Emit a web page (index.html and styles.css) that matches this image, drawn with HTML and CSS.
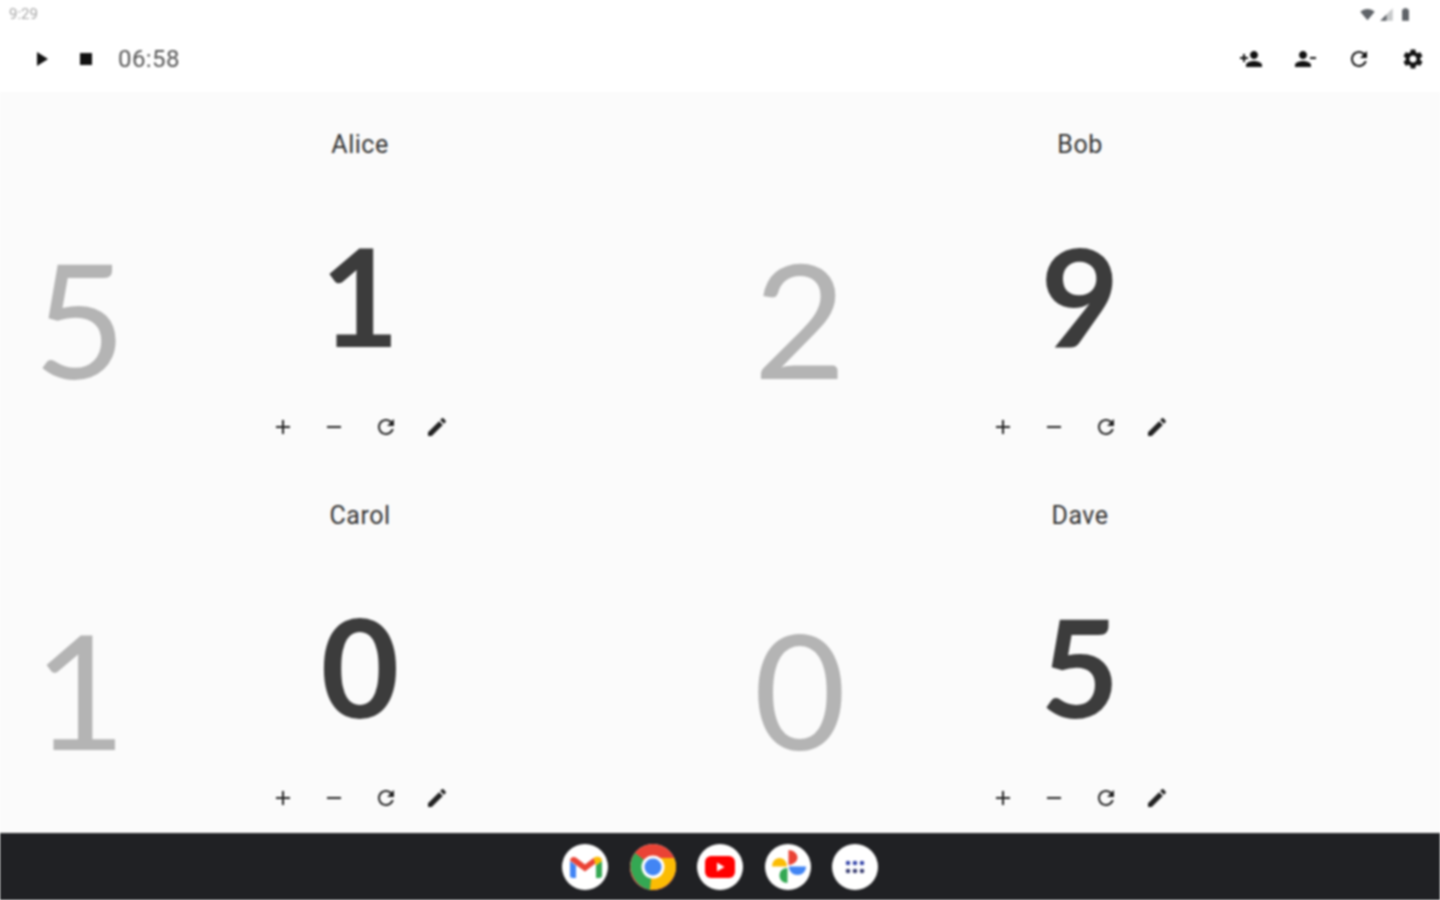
FILE: index.html
```html
<!DOCTYPE html>
<html>
<head>
  <title>Score Keeper</title>
  <link rel="stylesheet" href="styles.css">
</head>
<body>
  <svg class="icon-defs" width="0" height="0">
    <symbol id="i-play" viewBox="0 0 24 24"><path d="M8 5v14l11-7z"/></symbol>
    <symbol id="i-stop" viewBox="0 0 24 24"><path d="M6 6h12v12H6z"/></symbol>
    <symbol id="i-person-add" viewBox="0 0 24 24"><path d="M15 12c2.21 0 4-1.79 4-4s-1.79-4-4-4-4 1.79-4 4 1.79 4 4 4zm-9-2V7H4v3H1v2h3v3h2v-3h3v-2H6zm9 4c-2.67 0-8 1.34-8 4v2h16v-2c0-2.66-5.33-4-8-4z"/></symbol>
    <symbol id="i-person-remove" viewBox="0 0 24 24"><path d="M14 8c0-2.21-1.79-4-4-4S6 5.79 6 8s1.79 4 4 4 4-1.79 4-4zm3 2v2h6v-2h-6zM2 18v2h16v-2c0-2.66-5.33-4-8-4s-8 1.34-8 4z"/></symbol>
    <symbol id="i-refresh" viewBox="0 0 24 24"><path d="M17.65 6.35C16.2 4.9 14.21 4 12 4c-4.42 0-7.99 3.58-7.99 8s3.57 8 7.99 8c3.73 0 6.84-2.55 7.73-6h-2.08c-.82 2.33-3.04 4-5.65 4-3.31 0-6-2.69-6-6s2.69-6 6-6c1.66 0 3.14.69 4.22 1.78L13 11h7V4l-2.35 2.35z"/></symbol>
    <symbol id="i-settings" viewBox="0 0 24 24"><path d="M19.14 12.94c.04-.3.06-.61.06-.94 0-.32-.02-.64-.07-.94l2.03-1.58c.18-.14.23-.41.12-.61l-1.92-3.32c-.12-.22-.37-.29-.59-.22l-2.39.96c-.5-.38-1.03-.7-1.62-.94l-.36-2.54c-.04-.24-.24-.41-.48-.41h-3.84c-.24 0-.43.17-.47.41l-.36 2.54c-.59.24-1.13.57-1.62.94l-2.39-.96c-.22-.08-.47 0-.59.22L2.74 8.87c-.12.21-.08.47.12.61l2.03 1.58c-.05.3-.09.63-.09.94s.02.64.07.94l-2.03 1.58c-.18.14-.23.41-.12.61l1.92 3.32c.12.22.37.29.59.22l2.39-.96c.5.38 1.03.7 1.62.94l.36 2.54c.05.24.24.41.48.41h3.84c.24 0 .44-.17.47-.41l.36-2.54c.59-.24 1.13-.56 1.62-.94l2.39.96c.22.08.47 0 .59-.22l1.92-3.32c.12-.22.07-.47-.12-.61l-2.01-1.58zM12 15.6c-1.98 0-3.6-1.62-3.6-3.6s1.62-3.6 3.6-3.6 3.6 1.62 3.6 3.6-1.62 3.6-3.6 3.6z"/></symbol>
    <symbol id="i-add" viewBox="0 0 24 24"><path d="M19 13h-6v6h-2v-6H5v-2h6V5h2v6h6v2z"/></symbol>
    <symbol id="i-remove" viewBox="0 0 24 24"><path d="M19 13H5v-2h14v2z"/></symbol>
    <symbol id="i-edit" viewBox="0 0 24 24"><path d="M3 17.25V21h3.75L17.81 9.94l-3.75-3.75L3 17.25zM20.71 7.04c.39-.39.39-1.02 0-1.41l-2.34-2.34c-.39-.39-1.02-.39-1.41 0l-1.83 1.83 3.75 3.75 1.83-1.83z"/></symbol>
  </svg>

  <div class="status-bar">
    <span class="status-time">9:29</span>
    <div class="status-icons">
      <svg class="status-icon" viewBox="0 0 24 24"><path d="M12 21L0.5 7.500C3.500 4.800 7.500 3 12 3s8.500 1.800 11.500 4.500z"/></svg>
      <svg class="status-icon" viewBox="0 0 24 24"><path d="M2 22L22 2v20z" opacity=".35"/><path d="M2 22l10-10v10z"/></svg>
      <svg class="status-icon" viewBox="0 0 24 24"><path d="M9 2h6v2h2.500v18h-11V4H9z"/></svg>
    </div>
  </div>

  <header class="app-bar">
    <div class="timer-controls">
      <button class="ctrl-btn"><svg class="icon"><use href="#i-play"/></svg></button>
      <button class="ctrl-btn"><svg class="icon"><use href="#i-stop"/></svg></button>
      <span class="timer">06:58</span>
    </div>
    <div class="app-actions">
      <button class="action-btn"><svg class="icon"><use href="#i-person-add"/></svg></button>
      <button class="action-btn"><svg class="icon"><use href="#i-person-remove"/></svg></button>
      <button class="action-btn"><svg class="icon"><use href="#i-refresh"/></svg></button>
      <button class="action-btn"><svg class="icon"><use href="#i-settings"/></svg></button>
    </div>
  </header>

  <main class="players">
    <section class="player">
      <div class="prev-score">5</div>
      <div class="player-main">
        <div class="player-name">Alice</div>
        <div class="score">1</div>
        <div class="score-actions">
          <button class="score-btn"><svg class="icon-sm"><use href="#i-add"/></svg></button>
          <button class="score-btn"><svg class="icon-sm"><use href="#i-remove"/></svg></button>
          <button class="score-btn"><svg class="icon-sm"><use href="#i-refresh"/></svg></button>
          <button class="score-btn"><svg class="icon-sm"><use href="#i-edit"/></svg></button>
        </div>
      </div>
    </section>
    <section class="player">
      <div class="prev-score">2</div>
      <div class="player-main">
        <div class="player-name">Bob</div>
        <div class="score">9</div>
        <div class="score-actions">
          <button class="score-btn"><svg class="icon-sm"><use href="#i-add"/></svg></button>
          <button class="score-btn"><svg class="icon-sm"><use href="#i-remove"/></svg></button>
          <button class="score-btn"><svg class="icon-sm"><use href="#i-refresh"/></svg></button>
          <button class="score-btn"><svg class="icon-sm"><use href="#i-edit"/></svg></button>
        </div>
      </div>
    </section>
    <section class="player">
      <div class="prev-score">1</div>
      <div class="player-main">
        <div class="player-name">Carol</div>
        <div class="score">0</div>
        <div class="score-actions">
          <button class="score-btn"><svg class="icon-sm"><use href="#i-add"/></svg></button>
          <button class="score-btn"><svg class="icon-sm"><use href="#i-remove"/></svg></button>
          <button class="score-btn"><svg class="icon-sm"><use href="#i-refresh"/></svg></button>
          <button class="score-btn"><svg class="icon-sm"><use href="#i-edit"/></svg></button>
        </div>
      </div>
    </section>
    <section class="player">
      <div class="prev-score">0</div>
      <div class="player-main">
        <div class="player-name">Dave</div>
        <div class="score">5</div>
        <div class="score-actions">
          <button class="score-btn"><svg class="icon-sm"><use href="#i-add"/></svg></button>
          <button class="score-btn"><svg class="icon-sm"><use href="#i-remove"/></svg></button>
          <button class="score-btn"><svg class="icon-sm"><use href="#i-refresh"/></svg></button>
          <button class="score-btn"><svg class="icon-sm"><use href="#i-edit"/></svg></button>
        </div>
      </div>
    </section>
  </main>

  <footer class="dock">
    <div class="dock-app">
      <svg viewBox="0 0 46 46" class="dock-svg">
        <path d="M8 17c0-4 4-5 6.500-3L23 20.500l8.500-6.500 2.500 5-11 8.500-15-11z" fill="#ea4335"/>
        <path d="M8 17l6 4.500V34h-3.500C9 34 8 33 8 31.500z" fill="#4285f4"/>
        <path d="M34 21l6-4v14.500c0 1.500-1 2.500-2.500 2.500H34z" fill="#34a853"/>
        <path d="M31.500 14c2.500-2 8.500-2 8.500 3l-6 4.500z" fill="#fbbc04"/>
      </svg>
    </div>
    <div class="dock-app chrome">
      <svg viewBox="0 0 46 46" class="dock-svg">
        <circle cx="23" cy="23" r="23" fill="#ea4335"/>
        <path d="M23 23L5 9C0 16-1 24 3 32c3 7 9 12 17 14z" fill="#34a853"/>
        <path d="M23 14h21c4 8 2 18-5 25-4 4-10 7-19 7z" fill="#fbbc04"/>
        <circle cx="23" cy="23" r="11.500" fill="#fff"/>
        <circle cx="23" cy="23" r="8.500" fill="#4285f4"/>
      </svg>
    </div>
    <div class="dock-app">
      <svg viewBox="0 0 46 46" class="dock-svg">
        <rect x="8" y="12" width="30" height="22" rx="6" fill="#f00"/>
        <path d="M20 18.500v9l7.500-4.500z" fill="#fff"/>
      </svg>
    </div>
    <div class="dock-app">
      <svg viewBox="0 0 46 46" class="dock-svg">
        <path d="M23.500 21V6c5 0 9 4 9 7.500s-4 7.500-9 7.500z" fill="#ea4335"/>
        <path d="M24 22.500h17c0 5-4 8.500-8.500 8.500S24 27.500 24 22.500z" fill="#4285f4"/>
        <path d="M22.500 24v15c-5 0-8-3.500-8-7.500s3-7.500 8-7.500z" fill="#34a853"/>
        <path d="M22 22.500H7c0-5 3.500-8.500 7.500-8.500s7.500 3.500 7.500 8.500z" fill="#fbbc04"/>
      </svg>
    </div>
    <div class="dock-app">
      <svg viewBox="0 0 46 46" class="dock-svg">
        <g fill="#3c4073">
          <circle cx="16" cy="19" r="2.300" fill="#3949ab"/><circle cx="23" cy="19" r="2.300" fill="#3949ab"/><circle cx="30" cy="19" r="2.300" fill="#3949ab"/>
          <circle cx="16" cy="27" r="2.300"/><circle cx="23" cy="27" r="2.300"/><circle cx="30" cy="27" r="2.300"/>
        </g>
      </svg>
    </div>
  </footer>
</body>
</html>
```

FILE: styles.css
```css
* {
  box-sizing: border-box;
}

html, body {
  height: 100%;
}

body {
  margin: 0;
  display: flex;
  flex-direction: column;
  height: 900px;
  overflow: hidden;
  background-color: #fff;
  font-family: Roboto, Arial, sans-serif;
  filter: blur(0.85px);
}

button {
  border: none;
  background: none;
  padding: 0;
  cursor: pointer;
  display: flex;
  align-items: center;
  justify-content: center;
}

.icon-defs {
  position: absolute;
}

.status-bar {
  height: 28px;
  display: flex;
  align-items: center;
  justify-content: space-between;
  padding: 0 27px 0 9px;
}

.status-time {
  font-size: 15px;
  color: #a8a8a8;
}

.status-icons {
  display: flex;
  gap: 4px;
}

.status-icon {
  width: 15px;
  height: 15px;
  fill: #5f6368;
}

.app-bar {
  height: 64px;
  padding-bottom: 2px;
  display: flex;
  align-items: center;
  justify-content: space-between;
}

.timer-controls {
  display: flex;
  align-items: center;
  padding-left: 18px;
}

.ctrl-btn {
  width: 45px;
  height: 45px;
}

.timer {
  margin-left: 10px;
  font-size: 24px;
  letter-spacing: 0.4px;
  color: #555;
}

.app-actions {
  display: flex;
}

.action-btn {
  width: 54px;
  height: 54px;
}

.icon {
  width: 24px;
  height: 24px;
  fill: #111;
}

.players {
  flex: 1;
  display: grid;
  grid-template-columns: 1fr 1fr;
  grid-template-rows: 1fr 1fr;
  background-color: #fbfbfb;
}

.player {
  display: grid;
  grid-template-columns: 160px 1fr 160px;
  align-items: center;
}

.prev-score {
  font-family: Lato, sans-serif;
  font-weight: 400;
  font-size: 160px;
  line-height: 1;
  text-align: center;
  color: #b4b4b4;
  padding-top: 80px;
}

.player-main {
  grid-column: 2;
  height: 100%;
  display: flex;
  flex-direction: column;
  align-items: center;
}

.player-name {
  margin-top: 38px;
  font-size: 25px;
  letter-spacing: 0.5px;
  line-height: 30px;
  color: #333;
}

.score {
  margin-top: 55px;
  font-family: Lato, sans-serif;
  font-weight: 700;
  font-size: 136px;
  line-height: 160px;
  color: #3c3c3c;
}

.score-actions {
  margin-top: 30px;
  display: flex;
}

.score-btn {
  width: 51.5px;
  height: 44px;
}

.icon-sm {
  width: 24px;
  height: 24px;
  fill: #222;
}

.dock {
  height: 67px;
  display: flex;
  align-items: center;
  justify-content: center;
  gap: 21.5px;
  background-color: #202124;
}

.dock-app {
  width: 46px;
  height: 46px;
  border-radius: 50%;
  background-color: #fff;
}

.dock-svg {
  display: block;
  width: 46px;
  height: 46px;
}
```
